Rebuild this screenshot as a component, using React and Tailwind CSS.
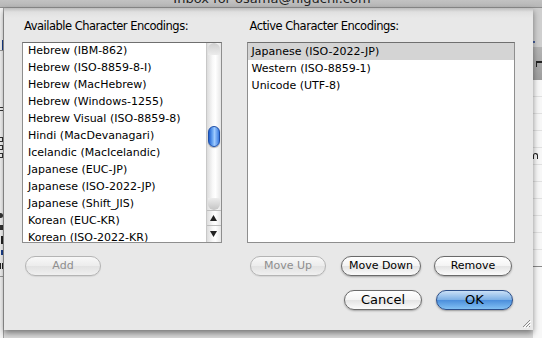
import React from 'react';

const available = [
  'Hebrew (IBM-862)',
  'Hebrew (ISO-8859-8-I)',
  'Hebrew (MacHebrew)',
  'Hebrew (Windows-1255)',
  'Hebrew Visual (ISO-8859-8)',
  'Hindi (MacDevanagari)',
  'Icelandic (MacIcelandic)',
  'Japanese (EUC-JP)',
  'Japanese (ISO-2022-JP)',
  'Japanese (Shift_JIS)',
  'Korean (EUC-KR)',
  'Korean (ISO-2022-KR)',
];

const active = ['Japanese (ISO-2022-JP)', 'Western (ISO-8859-1)', 'Unicode (UTF-8)'];

function Button({ children, className, kind = 'normal' }) {
  if (kind === 'disabled') {
    return (
      <div className={`h-[20px] rounded-full border border-[#b4b4b4] bg-[linear-gradient(to_bottom,#f8f8f8,#ececec_50%,#e2e2e2_51%,#f0f0f0)] flex items-center justify-center text-[11px] text-[#8e8e8e] shadow-[0_1px_1px_rgba(0,0,0,0.08)] ${className}`}>
        {children}
      </div>
    );
  }
  if (kind === 'primary') {
    return (
      <div className={`h-[20px] rounded-full border border-[#2c4f8a] bg-[linear-gradient(to_bottom,#c9e0f7,#7fb1e6_48%,#4c8fdc_52%,#82c0f3)] flex items-center justify-center text-[13px] text-black shadow-[0_1px_2px_rgba(0,0,0,0.35)] ${className}`}>
        {children}
      </div>
    );
  }
  return (
    <div className={`h-[20px] rounded-full border border-[#6a6a6a] bg-[linear-gradient(to_bottom,#ffffff,#f4f4f4_48%,#e4e4e4_52%,#fbfbfb)] flex items-center justify-center text-black shadow-[0_1px_2px_rgba(0,0,0,0.3)] ${className}`}>
      {children}
    </div>
  );
}

function Scrollbar() {
  return (
    <div className="w-[15px] flex flex-col border-l border-[#c8c8c8] bg-[linear-gradient(to_right,#dcdcdc,#f8f8f8_40%,#ffffff_60%,#e6e6e6)]">
      <div className="flex-1 flex flex-col">
        <div className="h-[12px] rounded-t-full bg-[linear-gradient(to_bottom,#cfcfcf,#ececec)] mx-[1px]" />
        <div className="h-[71px]" />
        <div className="mx-[1px] h-[21px] rounded-full border border-[#1e4fa8] bg-[linear-gradient(to_right,#1f5fd0,#6aa6f2_35%,#9fcbff_55%,#3b7be0)] shadow-[0_1px_1px_rgba(0,0,0,0.3)]" />
        <div className="flex-1" />
        <div className="h-[12px] rounded-b-full bg-[linear-gradient(to_top,#c4c4c4,#ececec)] mx-[1px]" />
      </div>
      <div className="h-[15px] border-t border-[#bdbdbd] flex items-center justify-center">
        <svg width="7" height="6" viewBox="0 0 7 6"><path d="M3.5 0 L7 6 L0 6 Z" fill="#222" /></svg>
      </div>
      <div className="h-[17px] border-t border-[#bdbdbd] flex items-center justify-center">
        <svg width="7" height="6" viewBox="0 0 7 6"><path d="M0 0 L7 0 L3.5 6 Z" fill="#222" /></svg>
      </div>
    </div>
  );
}

// slivers of the mail window that peek out beside the sheet
function LeftStrip() {
  return (
    <div className="w-[4px] flex flex-col bg-[#f3f3f3] border-r border-[#a0a0a0] overflow-hidden">
      <div className="h-[32px]" />
      <div className="h-[10px] flex justify-end"><div className="w-[1px] h-[10px] bg-[#1a3f8c]" /></div>
      <div className="h-[1px] bg-[#9a9a9a]" />
      <div className="h-[54px]" />
      <div className="h-[8px] flex justify-end items-center"><div className="w-[3px] h-[4px] border-t border-b border-[#333]" /></div>
      <div className="h-[22px]" />
      <div className="h-[8px] flex justify-end items-center"><div className="w-[3px] h-[5px] border border-[#333] border-l-0" /></div>
      <div className="h-[8px] flex justify-end items-center"><div className="w-[3px] h-[5px] border border-[#333] border-l-0" /></div>
      <div className="h-[8px] flex justify-end items-center"><div className="w-[3px] h-[5px] border border-[#333] border-l-0" /></div>
      <div className="h-[50px]" />
      <div className="h-[12px] flex justify-end items-center"><div className="w-[3px] h-[5px] bg-[#333] rounded-r-sm" /></div>
      <div className="h-[12px] flex justify-end items-center"><div className="w-[3px] h-[5px] bg-[#333]" /></div>
      <div className="h-[13px] flex justify-end items-center"><div className="w-[2px] h-[8px] bg-[#222]" /></div>
      <div className="h-[13px] flex justify-end items-center"><div className="w-[2px] h-[5px] bg-[#1a3f8c]" /></div>
      <div className="h-[13px] flex justify-end items-center"><div className="w-[3px] h-[6px] border-l border-r border-[#222]" /></div>
      <div className="h-[1px] bg-[#9a9a9a] mt-[4px]" />
    </div>
  );
}

function RightStrip() {
  return (
    <div className="w-[9px] flex flex-col overflow-hidden">
      <div className="h-[39px] bg-[#cfcfcf] flex items-end pb-[4px]">
        <div className="w-[2px] h-[2px] bg-[#1c3d8a] rounded-full" />
      </div>
      <div className="h-[33px] bg-[linear-gradient(to_bottom,#b4b4b4,#9e9e9e)] flex items-center justify-end">
        <div className="w-[6px] h-[6px] border-t-2 border-l border-[#222]" />
      </div>
      <div className="flex-1 bg-[#f7f7f7] flex flex-col">
        <div className="h-[17px] border-b border-[#e0e0e0]" />
        <div className="h-[17px] border-b border-[#e0e0e0]" />
        <div className="h-[17px] border-b border-[#e0e0e0]" />
        <div className="h-[17px] border-b border-[#e0e0e0]" />
        <div className="h-[17px] border-b border-[#e0e0e0] flex items-center"><div className="w-[5px] h-[6px] border-t border-l border-r border-[#222] rounded-t-sm" /></div>
        <div className="h-[17px] border-b border-[#e0e0e0]" />
        <div className="h-[17px] border-b border-[#e0e0e0]" />
        <div className="h-[17px] border-b border-[#e0e0e0]" />
        <div className="h-[17px] border-b border-[#e0e0e0]" />
        <div className="h-[17px] border-b border-[#e0e0e0]" />
        <div className="h-[17px] border-b border-[#888]" />
      </div>
    </div>
  );
}

export default function App() {
  return (
    <div className="w-[542px] h-[338px] overflow-hidden flex flex-col bg-[#d8d8d8] font-['Lucida_Grande','DejaVu_Sans',sans-serif] text-black">
      {/* window behind the sheet: title bar */}
      <div className="h-[8px] shrink-0 overflow-hidden bg-[linear-gradient(to_bottom,#c2c2c2,#b6b6b6)] border-b border-[#8c8c8c] flex justify-center">
        <div className="text-[13px] leading-[13px] -mt-[8px] text-[#222] pl-[2px]">Inbox for osama@higuchi.com</div>
      </div>
      <div className="flex-1 flex min-h-0">
        <LeftStrip />
        {/* sheet */}
        <div className="w-[529px] h-[322px] shrink-0 flex flex-col bg-[linear-gradient(to_bottom,#bdbdbd,#e0e0e0_4px,#e8e8e8_10px,#e8e8e8)] shadow-[0_3px_6px_rgba(0,0,0,0.45)] px-[18px] pt-[13px] relative">
          <div className="flex gap-[25px]">
            <div className="w-[200px] flex flex-col">
              <div className="h-[21px] text-[11.5px] leading-none pl-[2px] tracking-[-0.5px]">Available Character Encodings:</div>
              <div className="h-[201px] border border-[#8e8e8e] border-t-[#6f6f6f] bg-white flex">
                <div className="flex-1 overflow-hidden">
                  <div className="-mt-[1px]">
                    {available.map((t) => (
                      <div key={t} className="h-[17px] leading-[17px] pl-[5px] text-[11px] whitespace-nowrap">{t}</div>
                    ))}
                  </div>
                </div>
                <Scrollbar />
              </div>
            </div>
            <div className="w-[269px] flex flex-col">
              <div className="h-[21px] text-[11.5px] leading-none pl-[3px] tracking-[-0.5px]">Active Character Encodings:</div>
              <div className="h-[201px] border border-[#8e8e8e] border-t-[#6f6f6f] bg-white flex flex-col">
                {active.map((t, i) => (
                  <div key={t} className={i === 0 ? 'h-[17px] leading-[17px] pl-[4px] text-[11px] bg-[#d4d4d4]' : 'h-[17px] leading-[17px] pl-[4px] text-[11px]'}>{t}</div>
                ))}
              </div>
            </div>
          </div>
          <div className="flex mt-[13px]">
            <Button kind="disabled" className="w-[76px] ml-[3px]">Add</Button>
            <div className="flex-1" />
            <Button kind="disabled" className="w-[76px]">Move Up</Button>
            <Button className="w-[80px] ml-[15px] text-[11px]">Move Down</Button>
            <Button className="w-[78px] ml-[13px] mr-[3px] text-[11px]">Remove</Button>
          </div>
          <div className="flex justify-end mt-[14px] mr-[2px]">
            <Button className="w-[78px] text-[13px]">Cancel</Button>
            <Button kind="primary" className="w-[77px] ml-[14px]">OK</Button>
          </div>
          <svg className="absolute right-[2px] bottom-[2px]" width="10" height="10" viewBox="0 0 10 10">
            <path d="M9 2 L2 9 M9 5 L5 9 M9 8 L8 9" stroke="#8a8a8a" strokeWidth="1" />
            <path d="M10 3 L3 10 M10 6 L6 10" stroke="#ffffff" strokeWidth="1" />
          </svg>
        </div>
        <RightStrip />
      </div>
    </div>
  );
}
